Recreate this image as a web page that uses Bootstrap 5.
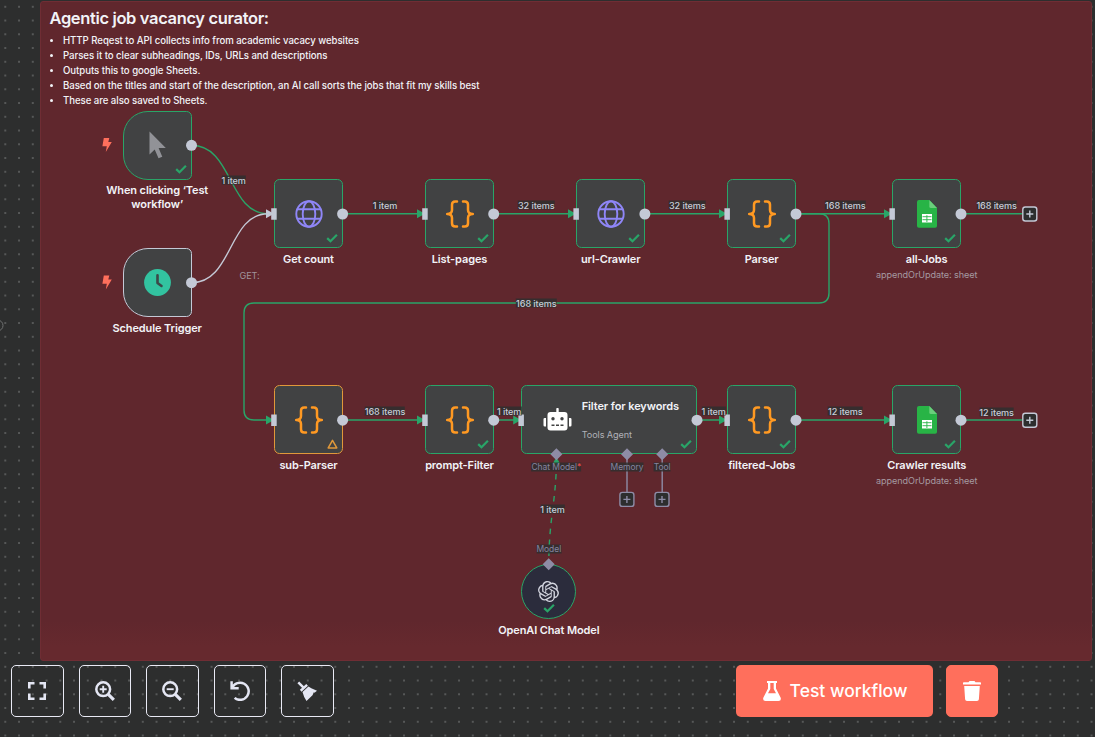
<!DOCTYPE html>
<html lang="en">
<head>
<meta charset="utf-8">
<meta name="viewport" content="width=device-width, initial-scale=1">
<title>Agentic job vacancy curator</title>
<link href="https://cdn.jsdelivr.net/npm/bootstrap@5.3.0/dist/css/bootstrap.min.css" rel="stylesheet">
<style>
:root{--ok:#29a568;--port:#c4c9d6;--warn:#e0983a;--sub:#8e8ca6;--brand:#ff6f5c}
body{font-family:Inter,"Liberation Sans",sans-serif;background:#2d2e2e;color:#f2f3f7}
.flow-canvas{width:1095px;height:737px;background-color:#2d2e2e;background-image:radial-gradient(circle,#6a6c6c 0,#6a6c6c .55px,transparent 1px);background-size:13.75px 13.75px;background-position:-1.6px -.1px}
.sticky{left:40px;top:1px;width:1052px;height:659.5px;background:linear-gradient(#60272d 0 94%,#66292e 98%);border:1px solid #6f2d34;border-radius:3px;padding:7px 8.500px}
.sticky h1{font-size:16.5px;font-weight:600;line-height:19px;letter-spacing:-.36px;margin:0 0 5px}
.sticky ul{font-size:9.63px;font-weight:500;line-height:15px;letter-spacing:-.05px;padding-left:13.500px}
.edges{left:0;top:0}
.flow-node{width:69px;height:69px;background:#414243;border:1.4px solid var(--ok);border-radius:5.5px}
.trigger{border-radius:25px 5.5px 5.5px 25px}
.idle{border-color:var(--port)}
.warned{border-color:var(--warn)}
.agent{width:176px}
.model{width:55px;height:55px;border-radius:50%;background:#2b2c3c}
.flow-node .state{position:absolute;right:4px;bottom:4.5px}
.model .state{right:20px;bottom:5px}
.caption{position:absolute;left:50%;top:72.4px;transform:translateX(-50%);width:120px;text-align:center;font-size:11px;line-height:13.8px;font-weight:600;letter-spacing:-.12px;white-space:nowrap}
.caption small{display:block;font-size:9.1px;font-weight:400;letter-spacing:-.08px;color:#a59aa1;line-height:14px;margin-top:1.400px}
.model .caption{top:58.5px}
.row-a{top:179.4px}.row-b{top:385.4px}
.c1{left:274px}.c2{left:425px}.c3{left:576.2px}.c4{left:727.2px}.c5{left:892.2px}
.p-click{left:122.7px;top:110.7px}.p-sched{left:122.7px;top:248.2px}.p-agent{left:521.2px}.p-model{left:521.3px;top:564.2px}
.agent-icon{left:21px;top:22px}
.agent-text{left:59.500px;top:12.500px}
.agent-text b{font-size:11px;font-weight:600;line-height:14px;letter-spacing:-.1px;white-space:nowrap}
.agent-text span{font-size:9.1px;line-height:12px;letter-spacing:-.08px;color:#b0b1b8;margin-top:16px}
.tag{position:absolute;transform:translate(-50%,-50%);font-size:9.1px;line-height:9px;font-weight:500;letter-spacing:-.1px;color:#c9ccd8;background:rgba(45,46,46,.82);white-space:nowrap}
.tag.kind{color:#8684a0;font-weight:400;font-size:8.5px;letter-spacing:-.06px}
.tag.kind i{color:#f04a4a;font-style:normal}
.tag.bare{background:none;color:#a0949c;font-weight:400}
.y1{top:204.500px}.y2{top:410.500px}.y3{top:466.9px}
.t-click{left:233.7px;top:179.500px}.t-get{left:249.5px;top:274.500px}
.x1{left:385px}.x2{left:536.3px}.x3{left:687.3px}.x4{left:845.3px}.x5{left:996.6px}
.xa{left:509.2px}.xb{left:713.7px}.t-end{top:411.5px}
.t-loop{left:536.3px;top:302.500px}.t-model{left:552.5px;top:508.500px}.t-port{left:548.8px;top:548.8px}
.k1{left:556.3px}.k2{left:627px}.k3{left:662.2px}
.tools-left{left:11.300px;top:664.8px;gap:15.100px}
.tools-right{left:736px;top:664.8px;gap:12.6px}
.tool-btn{width:52.4px;height:52.4px;border:1px solid #e9eaf5;border-radius:5px;padding:0;color:#e4e6f3;background:transparent}
.tool-btn.hot{background:var(--brand);border-color:var(--brand);color:#fff}
.run-btn{width:197px;height:52.4px;background:var(--brand);border-radius:5px;color:#fff;font-size:17.5px;font-weight:500;padding:0 0 0 1px;gap:9px}
.tool-btn:hover,.run-btn:hover{color:#fff;filter:brightness(1.05)}
</style>
<script src="https://cdn.jsdelivr.net/npm/bootstrap@5.3.0/dist/js/bootstrap.bundle.min.js"></script>
</head>
<body class="overflow-hidden">
<svg class="d-none">
  <symbol id="tick" viewBox="0 0 12 10"><path d="M1.2 5.1 4.5 8.3 10.9 1.8" fill="none" stroke="#29a568" stroke-width="2.2"/></symbol>
  <symbol id="alert" viewBox="0 0 11 10"><path d="M5.5 1.3 9.8 8.9H1.2Z" fill="none" stroke="#e0983a" stroke-width="1.5" stroke-linejoin="round"/></symbol>
  <symbol id="braces" viewBox="0 0 28 28"><path d="M11 1.5H9.2Q6 1.5 6 4.8V10Q6 14 1.2 14 6 14 6 18V23.2Q6 26.5 9.2 26.5H11M17 1.5H18.800Q22 1.500 22 4.800V10Q22 14 26.800 14 22 14 22 18V23.200Q22 26.500 18.800 26.500H17" fill="none" stroke="#ff9922" stroke-width="2.5" stroke-linecap="round" stroke-linejoin="round"/></symbol>
  <symbol id="globe" viewBox="0 0 28 28"><g fill="none" stroke="#8f86f7" stroke-width="1.9"><circle cx="14" cy="14" r="12.7"/><ellipse cx="14" cy="14" rx="6.300" ry="12.700"/><path d="M2 9.300H26M2 18.700H26"/></g></symbol>
  <symbol id="sheet" viewBox="0 0 20 28"><path d="M2 0H12.300L20 8V26a1.800 1.800 0 0 1-1.800 1.800H1.800A1.800 1.800 0 0 1 0 26V2A2 2 0 0 1 2 0Z" fill="#28b446"/><path d="M12.300 0 20 8H14Q12.300 8 12.300 6.500Z" fill="#6ace7c"/><path d="M5 14H15V22.500H5Z" fill="#fff"/><path d="M5.500 16.700H14.500M5.500 19.700H14.500M9.900 15.200V22" stroke="#28b446" stroke-width=".9"/></symbol>
  <symbol id="bolt" viewBox="0 0 11 15"><path d="M2.300.4H7.800L6.800 4.600H10.300L4.300 14.600 5.300 8.700H.9Z" fill="#ff6f5c"/></symbol>
</svg>

<main class="flow-canvas position-relative overflow-hidden">
  <section class="sticky position-absolute">
    <h1>Agentic job vacancy curator:</h1>
    <ul class="mb-0">
      <li>HTTP Reqest to API collects info from academic vacacy websites</li>
      <li>Parses it to clear subheadings, IDs, URLs and descriptions</li>
      <li>Outputs this to google Sheets.</li>
      <li>Based on the titles and start of the description, an AI call sorts the jobs that fit my skills best</li>
      <li>These are also saved to Sheets.</li>
    </ul>
  </section>

  <!-- connections -->
  <svg class="edges position-absolute" width="1095" height="737" fill="none" stroke="#29a568" stroke-width="1.4">
    <circle cx="-2.500" cy="325.500" r="5.500" stroke="#6f7171" stroke-width="1"/>
    <path d="M191.500 145.300C233 145.300 228 213.800 268 213.800"/>
    <path d="M191.500 282.700C233 282.700 228 213.800 268 213.800" stroke="#c4c9d6"/>
    <path d="M343 213.800H420M494 213.800H571M645 213.800H722M796 213.800H887M961 213.800H1022"/>
    <path d="M796 213.800H819Q829 213.800 829 223.800V293Q829 303 819 303H254Q244 303 244 313V410Q244 420 254 420H268"/>
    <path d="M343 420H420M494 420H517M697 420H722M796 420H887M961 420H1022"/>
    <path d="M556.400 463C556 500 549 520 548.800 562" stroke-dasharray="5.500 5.500"/>
    <path d="M627 456V492M662.200 456V492" stroke="#8e8ca6"/>
  </svg>

  <!-- nodes -->
  <div class="flow-node trigger position-absolute p-click d-flex align-items-center justify-content-center">
    <svg width="17" height="28" viewBox="0 0 17 28"><path d="M.500.500V23.500L5.700 18.600 9.500 27.300 13.300 25.700 9.600 17H16.800Z" fill="#919297"/></svg>
    <svg class="state" width="12" height="10"><use href="#tick"/></svg>
    <div class="caption">When clicking ‘Test<br>workflow’</div>
  </div>
  <div class="flow-node trigger idle position-absolute p-sched d-flex align-items-center justify-content-center">
    <svg width="27" height="27" viewBox="0 0 27 27"><circle cx="13.500" cy="13.500" r="13.400" fill="#32c3a0"/><path d="M13.500 6.200V14L17.500 17" fill="none" stroke="#3c4848" stroke-width="2.600" stroke-linecap="round" stroke-linejoin="round"/></svg>
    <div class="caption">Schedule Trigger</div>
  </div>

  <div class="flow-node position-absolute row-a c1 d-flex align-items-center justify-content-center"><svg width="28" height="28"><use href="#globe"/></svg><svg class="state" width="12" height="10"><use href="#tick"/></svg><div class="caption">Get count</div></div>
  <div class="flow-node position-absolute row-a c2 d-flex align-items-center justify-content-center"><svg width="28" height="28"><use href="#braces"/></svg><svg class="state" width="12" height="10"><use href="#tick"/></svg><div class="caption">List-pages</div></div>
  <div class="flow-node position-absolute row-a c3 d-flex align-items-center justify-content-center"><svg width="28" height="28"><use href="#globe"/></svg><svg class="state" width="12" height="10"><use href="#tick"/></svg><div class="caption">url-Crawler</div></div>
  <div class="flow-node position-absolute row-a c4 d-flex align-items-center justify-content-center"><svg width="28" height="28"><use href="#braces"/></svg><svg class="state" width="12" height="10"><use href="#tick"/></svg><div class="caption">Parser</div></div>
  <div class="flow-node position-absolute row-a c5 d-flex align-items-center justify-content-center"><svg width="20" height="28"><use href="#sheet"/></svg><svg class="state" width="12" height="10"><use href="#tick"/></svg><div class="caption">all-Jobs<small>appendOrUpdate: sheet</small></div></div>

  <div class="flow-node warned position-absolute row-b c1 d-flex align-items-center justify-content-center"><svg width="28" height="28"><use href="#braces"/></svg><svg class="state" width="11" height="10"><use href="#alert"/></svg><div class="caption">sub-Parser</div></div>
  <div class="flow-node position-absolute row-b c2 d-flex align-items-center justify-content-center"><svg width="28" height="28"><use href="#braces"/></svg><svg class="state" width="12" height="10"><use href="#tick"/></svg><div class="caption">prompt-Filter</div></div>
  <div class="flow-node agent position-absolute row-b p-agent">
    <svg class="agent-icon position-absolute" width="29" height="24" viewBox="0 0 29 24"><path d="M13.300 1a1.200 1.200 0 0 1 2.400 0V4H21.500A3 3 0 0 1 24.500 7V19.500A3 3 0 0 1 21.500 22.500H7.500A3 3 0 0 1 4.500 19.500V7A3 3 0 0 1 7.500 4H13.300ZM.500 11.200Q.500 10 1.700 10H3V18.500H1.700Q.500 18.500.500 17.300ZM28.500 11.200Q28.500 10 27.300 10H26V18.500H27.300Q28.500 18.500 28.500 17.300Z" fill="#fff"/><g fill="#414243"><circle cx="10" cy="10.800" r="1.700"/><circle cx="19" cy="10.800" r="1.700"/><path d="M8.500 16.500H11.500V18H8.500ZM13 16.500H16V18H13ZM17.500 16.500H20.500V18H17.500Z"/></g></svg>
    <div class="agent-text position-absolute d-flex flex-column"><b>Filter for keywords</b><span>Tools Agent</span></div>
    <svg class="state" width="12" height="10"><use href="#tick"/></svg>
  </div>
  <div class="flow-node position-absolute row-b c4 d-flex align-items-center justify-content-center"><svg width="28" height="28"><use href="#braces"/></svg><svg class="state" width="12" height="10"><use href="#tick"/></svg><div class="caption">filtered-Jobs</div></div>
  <div class="flow-node position-absolute row-b c5 d-flex align-items-center justify-content-center"><svg width="20" height="28"><use href="#sheet"/></svg><svg class="state" width="12" height="10"><use href="#tick"/></svg><div class="caption">Crawler results<small>appendOrUpdate: sheet</small></div></div>
  <div class="flow-node model position-absolute p-model d-flex align-items-center justify-content-center">
    <svg width="21" height="21" viewBox="0 0 24 24" fill="#d3d5df"><path d="M22.2819 9.8211a5.9847 5.9847 0 0 0-.5157-4.9108 6.0462 6.0462 0 0 0-6.5098-2.9A6.0651 6.0651 0 0 0 4.9807 4.1818a5.9847 5.9847 0 0 0-3.9977 2.9 6.0462 6.0462 0 0 0 .7427 7.0966 5.98 5.98 0 0 0 .511 4.9107 6.051 6.051 0 0 0 6.5146 2.9001A5.9847 5.9847 0 0 0 13.2599 24a6.0557 6.0557 0 0 0 5.7718-4.2058 5.9894 5.9894 0 0 0 3.9977-2.9001 6.0557 6.0557 0 0 0-.7475-7.0729zm-9.022 12.6081a4.4755 4.4755 0 0 1-2.8764-1.0408l.1419-.0804 4.7783-2.7582a.7948.7948 0 0 0 .3927-.6813v-6.7369l2.02 1.1686a.071.071 0 0 1 .038.052v5.5826a4.504 4.504 0 0 1-4.4945 4.4944zm-9.6607-4.1254a4.4708 4.4708 0 0 1-.5346-3.0137l.142.0852 4.783 2.7582a.7712.7712 0 0 0 .7806 0l5.8428-3.3685v2.3324a.0804.0804 0 0 1-.0332.0615L9.74 19.9502a4.4992 4.4992 0 0 1-6.1408-1.6464zM2.3408 7.8956a4.485 4.485 0 0 1 2.3655-1.9728V11.6a.7664.7664 0 0 0 .3879.6765l5.8144 3.3543-2.0201 1.1685a.0757.0757 0 0 1-.071 0l-4.8303-2.7865A4.504 4.504 0 0 1 2.3408 7.872zm16.5963 3.8558L13.1038 8.364 15.1192 7.2a.0757.0757 0 0 1 .071 0l4.8303 2.7913a4.4944 4.4944 0 0 1-.6765 8.1042v-5.6772a.79.79 0 0 0-.407-.667zm2.0107-3.0231l-.142-.0852-4.7735-2.7818a.7759.7759 0 0 0-.7854 0L9.409 9.2297V6.8974a.0662.0662 0 0 1 .0284-.0615l4.8303-2.7866a4.4992 4.4992 0 0 1 6.6802 4.66zM8.3065 12.863l-2.02-1.1638a.0804.0804 0 0 1-.038-.0567V6.0742a4.4992 4.4992 0 0 1 7.3757-3.4537l-.142.0805L8.704 5.459a.7948.7948 0 0 0-.3927.6813zm1.0976-2.3654l2.602-1.4998 2.6069 1.4998v2.9994l-2.5974 1.4997-2.6067-1.4997Z"/></svg>
    <svg class="state" width="12" height="10"><use href="#tick"/></svg>
    <div class="caption">OpenAI Chat Model</div>
  </div>

  <!-- ports, arrowheads, trigger bolts and add buttons -->
  <svg class="edges position-absolute" width="1095" height="737">
    <use href="#bolt" x="101.500" y="137.500" width="11" height="15"/>
    <use href="#bolt" x="101.500" y="275" width="11" height="15"/>
    <g fill="#29a568">
      <path d="M417 209.300 425 213.800 417 218.300ZM568 209.300 576 213.800 568 218.300ZM719 209.300 727 213.800 719 218.300ZM884 209.300 892 213.800 884 218.300Z"/>
      <path d="M266 415.500 274 420 266 424.500ZM417 415.500 425 420 417 424.500ZM513.200 415.500 521.200 420 513.200 424.500ZM719 415.500 727 420 719 424.500ZM884 415.500 892 420 884 424.500Z"/>
      <path d="M552.500 464 556.400 457 560.300 464Z"/>
    </g>
    <g fill="#c4c9d6">
      <path d="M266 209.300 274 213.800 266 218.300Z"/>
      <path d="M271.200 208.200h5.500v11.500h-5.500zM422.200 208.200h5.500v11.500h-5.500zM573.400 208.200h5.500v11.500h-5.500zM724.400 208.200h5.500v11.500h-5.500zM889.400 208.200h5.500v11.500h-5.500z"/>
      <path d="M271.200 414.400h5.500v11.500h-5.500zM422.200 414.400h5.500v11.500h-5.500zM518.400 414.400h5.500v11.500h-5.500zM724.400 414.400h5.500v11.500h-5.500zM889.400 414.400h5.500v11.500h-5.500z"/>
      <circle cx="191.500" cy="145.300" r="5.500"/><circle cx="191.500" cy="282.700" r="5.500"/>
      <circle cx="342.600" cy="214" r="5.500"/><circle cx="493.700" cy="214" r="5.500"/><circle cx="644.900" cy="214" r="5.500"/><circle cx="796" cy="214" r="5.500"/><circle cx="961" cy="214" r="5.500"/>
      <circle cx="342.600" cy="420.200" r="5.500"/><circle cx="493.700" cy="420.200" r="5.500"/><circle cx="697" cy="420.200" r="5.500"/><circle cx="796" cy="420.200" r="5.500"/><circle cx="961" cy="420.200" r="5.500"/>
    </g>
    <path d="M556.400 448.200l6 6-6 6-6-6zM627 448.200l6 6-6 6-6-6zM662.200 448.200l6 6-6 6-6-6zM548.700 558.300l6 6-6 6-6-6z" fill="#8e8ca6"/>
    <g fill="#2d2e2e" stroke="#c4c9d6" stroke-width="1.400">
      <rect x="1022.800" y="207" width="14" height="14" rx="2.500"/><path d="M1026.300 214h7M1029.800 210.500v7"/>
      <rect x="1022.800" y="413.200" width="14" height="14" rx="2.500"/><path d="M1026.300 420.200h7M1029.800 416.700v7"/>
    </g>
    <g fill="#2d2e2e" stroke="#8e8ca6" stroke-width="1.400">
      <rect x="619.900" y="492.400" width="14" height="14" rx="2.500"/><path d="M623.400 499.400h7M626.900 495.900v7"/>
      <rect x="655" y="492.400" width="14" height="14" rx="2.500"/><path d="M658.500 499.400h7M662 495.900v7"/>
    </g>
  </svg>

  <!-- connection labels -->
  <span class="tag t-click">1 item</span>
  <span class="tag bare t-get">GET:</span>
  <span class="tag x1 y1">1 item</span><span class="tag x2 y1">32 items</span><span class="tag x3 y1">32 items</span><span class="tag x4 y1">168 items</span><span class="tag x5 y1">168 items</span>
  <span class="tag t-loop">168 items</span>
  <span class="tag x1 y2">168 items</span><span class="tag xa y2">1 item</span><span class="tag xb y2">1 item</span><span class="tag x4 y2">12 items</span><span class="tag x5 t-end">12 items</span>
  <span class="tag kind k1 y3">Chat Model<i>*</i></span><span class="tag kind k2 y3">Memory</span><span class="tag kind k3 y3">Tool</span>
  <span class="tag t-model">1 item</span><span class="tag kind t-port">Model</span>

  <!-- view controls -->
  <div class="tools-left position-absolute d-flex">
    <button class="tool-btn btn d-flex align-items-center justify-content-center" aria-label="Fit view"><svg width="18" height="18" viewBox="0 0 18 18" fill="none" stroke="currentColor" stroke-width="2.600"><path d="M1.300 6.500V1.300H6.500M11.500 1.300H16.700V6.500M16.700 11.500V16.700H11.500M6.500 16.700H1.300V11.500"/></svg></button>
    <button class="tool-btn btn d-flex align-items-center justify-content-center" aria-label="Zoom in"><svg width="20" height="20" viewBox="0 0 20 20" fill="none" stroke="currentColor"><circle cx="8.200" cy="8.200" r="6.900" stroke-width="2.500"/><path d="M13.300 13.300 18.800 18.800" stroke-width="3.200"/><path d="M4.700 8.200H11.700M8.200 4.700V11.700" stroke-width="1.900"/></svg></button>
    <button class="tool-btn btn d-flex align-items-center justify-content-center" aria-label="Zoom out"><svg width="20" height="20" viewBox="0 0 20 20" fill="none" stroke="currentColor"><circle cx="8.200" cy="8.200" r="6.900" stroke-width="2.500"/><path d="M13.300 13.300 18.800 18.800" stroke-width="3.200"/><path d="M4.700 8.200H11.700" stroke-width="1.900"/></svg></button>
    <button class="tool-btn btn d-flex align-items-center justify-content-center" aria-label="Reset zoom"><svg width="20" height="20" viewBox="0 0 20 20" fill="none" stroke="currentColor" stroke-width="2.500"><path d="M1.600.300V7.200H8.700M2.200 6.800A8.600 8.600 0 1 1 4.600 16.900"/><path d="M1 4V8H6Z" fill="currentColor" stroke="none"/></svg></button>
    <button class="tool-btn btn d-flex align-items-center justify-content-center" aria-label="Tidy up"><svg width="20" height="20" viewBox="0 0 20 20" fill="currentColor"><path d="M1.300 1.300 6.300 6.300M3.700 9.700 10.100 3.900" fill="none" stroke="currentColor" stroke-width="2.500"/><path d="M5.500 11 11.500 5.500 14.300 7.300 20 9.700 17.500 11.800 16.800 11.300 15.500 14.300 9.500 20 7.200 16Z"/></svg></button>
  </div>
  <div class="tools-right position-absolute d-flex">
    <button class="run-btn btn d-flex align-items-center justify-content-center"><svg width="18" height="20" viewBox="0 0 18 20" fill="currentColor"><path fill-rule="evenodd" d="M4 0H14V2H13V7.500L17.700 16.800Q18.500 20 15.500 20H2.500Q-.500 20 .300 16.800L5 7.500V2H4ZM7.300 2V8L5 12.300H13L10.700 8V2Z"/></svg><span>Test workflow</span></button>
    <button class="tool-btn hot btn d-flex align-items-center justify-content-center" aria-label="Delete execution"><svg width="18" height="20" viewBox="0 0 18 20" fill="currentColor"><path d="M.800 1.200H5.500L6.500 0H11.500L12.500 1.200H17.200Q18 1.200 18 2V3.600H0V2Q0 1.200.800 1.200ZM1.200 5H16.800L15.900 18.200Q15.700 20 14 20H4Q2.300 20 2.100 18.200Z"/></svg></button>
  </div>
</main>
</body>
</html>
